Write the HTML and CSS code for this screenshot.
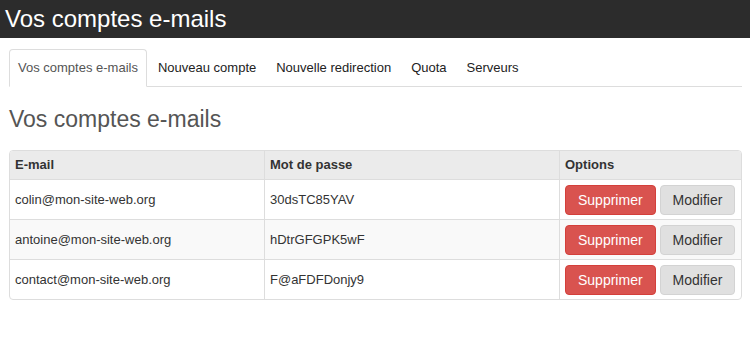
FILE: index.html
```html
<!DOCTYPE html>
<html lang="fr">
<head>
    <meta charset="UTF-8">
    <meta name="viewport" content="width=device-width, initial-scale=1.0">
    <title>Vos comptes e-mails</title>
    <link rel="stylesheet" href="styles.css">
</head>
<body>

    <header class="topbar">
        <h1>Vos comptes e-mails</h1>
    </header>

    <div class="container">
        <ul class="tabs">
            <li class="active"><a href="#">Vos comptes e-mails</a></li>
            <li><a href="#">Nouveau compte</a></li>
            <li><a href="#">Nouvelle redirection</a></li>
            <li><a href="#">Quota</a></li>
            <li><a href="#">Serveurs</a></li>
        </ul>

        <h2>Vos comptes e-mails</h2>

        <div class="panel">
            <table class="accounts">
                <thead>
                    <tr>
                        <th class="col-mail">E-mail</th>
                        <th class="col-pass">Mot de passe</th>
                        <th class="col-opt">Options</th>
                    </tr>
                </thead>
                <tbody>
                    <tr>
                        <td>colin@mon-site-web.org</td>
                        <td>30dsTC85YAV</td>
                        <td><div class="actions"><button class="btn btn-danger">Supprimer</button><button class="btn btn-default">Modifier</button></div></td>
                    </tr>
                    <tr>
                        <td>antoine@mon-site-web.org</td>
                        <td>hDtrGFGPK5wF</td>
                        <td><div class="actions"><button class="btn btn-danger">Supprimer</button><button class="btn btn-default">Modifier</button></div></td>
                    </tr>
                    <tr>
                        <td>contact@mon-site-web.org</td>
                        <td>F@aFDFDonjy9</td>
                        <td><div class="actions"><button class="btn btn-danger">Supprimer</button><button class="btn btn-default">Modifier</button></div></td>
                    </tr>
                </tbody>
            </table>
        </div>
    </div>

</body>
</html>
```

FILE: styles.css
```css
body {
    font-family: "Liberation Sans", Arial, sans-serif;
    font-size: 13px;
    color: #333;
    margin: 0;
    padding: 0;
    background-color: #fff;
}
.topbar {
    height: 38px;
    background-color: #2c2c2c;
    padding: 0 5px;
}
.topbar h1 {
    margin: 0;
    font-size: 24px;
    font-weight: normal;
    line-height: 38px;
    color: #fff;
}
.container {
    padding: 0 8px 0 9px;
}
.tabs {
    list-style: none;
    margin: 11px 0 0 0;
    padding: 0;
    display: flex;
    border-bottom: 1px solid #ddd;
}
.tabs li {
    margin-right: 2px;
    margin-bottom: -1px;
}
.tabs a {
    display: block;
    padding: 9px 8px;
    line-height: 18px;
    color: #222;
    text-decoration: none;
    border: 1px solid transparent;
    border-radius: 4px 4px 0 0;
}
.tabs .active a {
    color: #555;
    background-color: #fff;
    border-color: #ddd #ddd transparent;
}
h2 {
    margin: 20px 0 18px;
    font-size: 23px;
    font-weight: normal;
    line-height: 25px;
    color: #555;
}
.panel {
    width: 731px;
    border: 1px solid #ddd;
    border-radius: 4px;
    overflow: hidden;
}
.accounts {
    width: 100%;
    border-collapse: collapse;
}
.accounts th,
.accounts td {
    text-align: left;
    padding: 5px;
    line-height: 18px;
    border-left: 1px solid #ddd;
    border-top: 1px solid #ddd;
    vertical-align: middle;
}
.accounts th:first-child,
.accounts td:first-child {
    border-left: none;
}
.accounts thead th {
    border-top: none;
    background-color: #ebebeb;
    font-weight: bold;
}
.accounts td {
    padding: 5px 5px 4px;
}
.accounts tbody tr:nth-child(even) td {
    background-color: #f9f9f9;
}
.col-mail {
    width: 244px;
}
.col-pass {
    width: 284px;
}
.actions {
    display: flex;
    gap: 4px;
}
.btn {
    font-family: inherit;
    font-size: 14px;
    line-height: 20px;
    padding: 4px 12px;
    border: 1px solid transparent;
    border-radius: 4px;
    cursor: pointer;
}
.btn-danger {
    background-color: #d9534f;
    border-color: #d43f3a;
    color: #fff;
}
.btn-default {
    background-color: #e0e0e0;
    border-color: #d3d3d3;
    color: #333;
}
```
